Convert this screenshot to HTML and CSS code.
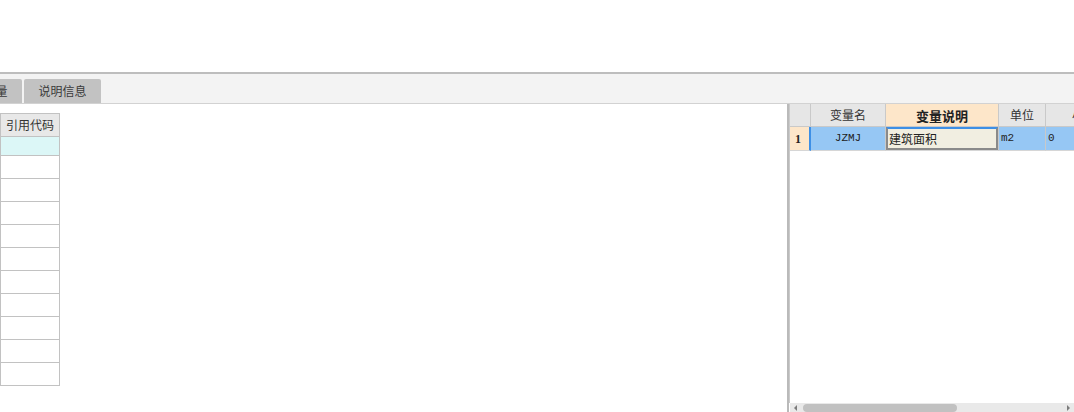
FILE: index.html
```html
<!DOCTYPE html>
<html lang="zh">
<head>
<meta charset="utf-8">
<link rel="stylesheet" href="styles.css">
</head>
<body>
<div class="page">
  <div class="top"></div>
  <div class="tabbar">
    <div class="tab tab-cut">全局变量</div>
    <div class="tab">说明信息</div>
  </div>
  <div class="main">
    <div class="left">
      <div class="ltable">
        <div class="lhead">引用代码</div>
        <div class="lrow lrow-active"></div>
        <div class="lrow"></div>
        <div class="lrow"></div>
        <div class="lrow"></div>
        <div class="lrow"></div>
        <div class="lrow"></div>
        <div class="lrow"></div>
        <div class="lrow"></div>
        <div class="lrow"></div>
        <div class="lrow"></div>
        <div class="lrow"></div>
      </div>
    </div>
    <div class="right">
      <div class="gridwrap">
        <div class="grid">
          <div class="hc"></div>
          <div class="hc">变量名</div>
          <div class="hc hc-sel">变量说明</div>
          <div class="hc">单位</div>
          <div class="hc hc-last">小数位</div>

          <div class="rc rc-num">1</div>
          <div class="rc rc-name">JZMJ</div>
          <div class="rc rc-edit"><span class="editor">建筑面积</span></div>
          <div class="rc rc-small">m2</div>
          <div class="rc rc-small">0</div>
        </div>
      </div>
      <div class="hscroll">
        <span class="arrow arrow-left"></span>
        <span class="thumb"></span>
        <span class="track-rest"></span>
        <span class="arrow arrow-right"></span>
      </div>
    </div>
  </div>
</div>
</body>
</html>
```

FILE: styles.css
```css
* { box-sizing: border-box; }
html, body { margin: 0; padding: 0; background: #ffffff; }
body {
  font-family: "Noto Sans CJK SC", "Noto Sans", sans-serif;
  font-size: 12px;
  color: #333;
  overflow: hidden;
}
.page {
  width: 1074px;
  height: 412px;
  display: flex;
  flex-direction: column;
  overflow: hidden;
}
.top { height: 72px; flex: none; }

.tabbar {
  flex: none;
  height: 32px;
  border-top: 2px solid #bdbdbd;
  border-bottom: 1px solid #d2d2d2;
  background: #f3f3f3;
  display: flex;
  align-items: flex-end;
  gap: 2px;
  overflow: hidden;
}
.tab {
  flex: none;
  width: 77px;
  height: 24px;
  background: #c2c2c2;
  border-radius: 2px 2px 0 0;
  display: flex;
  align-items: center;
  justify-content: center;
  font-size: 12px;
  color: #3a3a3a;
  line-height: 1;
}
.tab-cut { margin-left: -55px; }

.main {
  flex: 1;
  display: flex;
  min-height: 0;
}
.left {
  flex: 1;
  padding-top: 9px;
}
.ltable {
  width: 60px;
  border: 1px solid #c2c2c2;
  border-bottom: none;
}
.lhead {
  height: 23px;
  background: #e8e8e8;
  border-bottom: 1px solid #c2c2c2;
  display: flex;
  align-items: center;
  justify-content: center;
  font-size: 12px;
  color: #333;
  line-height: 1;
}
.lrow {
  height: 23px;
  border-bottom: 1px solid #c2c2c2;
}
.lrow-active {
  height: 19px;
  background: #dcf7f7;
}

.right {
  flex: none;
  width: 287px;
  border-left: 2px solid #bababa;
  display: flex;
  flex-direction: column;
  overflow: hidden;
}
.gridwrap {
  flex: 1;
  border-left: 1px solid #cacaca;
  overflow: hidden;
}
.grid {
  display: grid;
  grid-template-columns: 21px 75px 113px 47px 100px;
  grid-template-rows: 23px 24px;
  width: 356px;
}
.hc {
  background: #e6e6e6;
  border-right: 1px solid #c9c9c9;
  border-bottom: 1px solid #c9c9c9;
  display: flex;
  align-items: center;
  justify-content: center;
  font-size: 12px;
  color: #333;
  line-height: 1;
  white-space: nowrap;
}
.hc-sel {
  background: #fde6c9;
  font-weight: bold;
  font-size: 13px;
  color: #222;
}
.hc-last { justify-content: flex-start; padding-left: 26px; }

.rc {
  background: #96c7f4;
  border-right: 1px solid #c9c9c9;
  border-bottom: 1px solid #d6d6d6;
  display: flex;
  align-items: center;
  line-height: 1;
  white-space: nowrap;
}
.rc-num {
  background: #fde6c9;
  font-family: "Liberation Serif", "DejaVu Serif", serif;
  font-weight: bold;
  font-size: 12px;
  color: #222;
  padding-left: 5px;
  border-right: 2px solid #3d8fe6;
}
.rc-name {
  justify-content: center;
  font-family: "Liberation Mono", "DejaVu Sans Mono", monospace;
  font-size: 11px;
  color: #222;
}
.rc-edit {
  background: #96c7f4;
  padding: 0;
  align-items: stretch;
}
.editor {
  flex: 1;
  background: #f1eee1;
  border: 2px solid #8a8a8a;
  border-top-color: #3d8fe6;
  display: flex;
  align-items: center;
  padding-left: 1px;
  font-size: 12px;
  color: #222;
}
.rc-small {
  font-family: "Liberation Mono", "DejaVu Sans Mono", monospace;
  font-size: 11px;
  color: #222;
  padding-left: 2px;
}

.hscroll {
  flex: none;
  height: 9px;
  margin-left: 1px;
  background: #e9e9e9;
  display: flex;
  align-items: center;
  padding: 0 4px;
}
.arrow {
  flex: none;
  width: 0;
  height: 0;
  border-top: 3px solid transparent;
  border-bottom: 3px solid transparent;
}
.arrow-left { border-right: 3px solid #7c7c7c; margin-right: 6px; }
.arrow-right { border-left: 3px solid #7c7c7c; }
.thumb {
  flex: none;
  width: 154px;
  height: 8px;
  border-radius: 4px;
  background: #c1c1c1;
}
.track-rest { flex: 1; }
```
